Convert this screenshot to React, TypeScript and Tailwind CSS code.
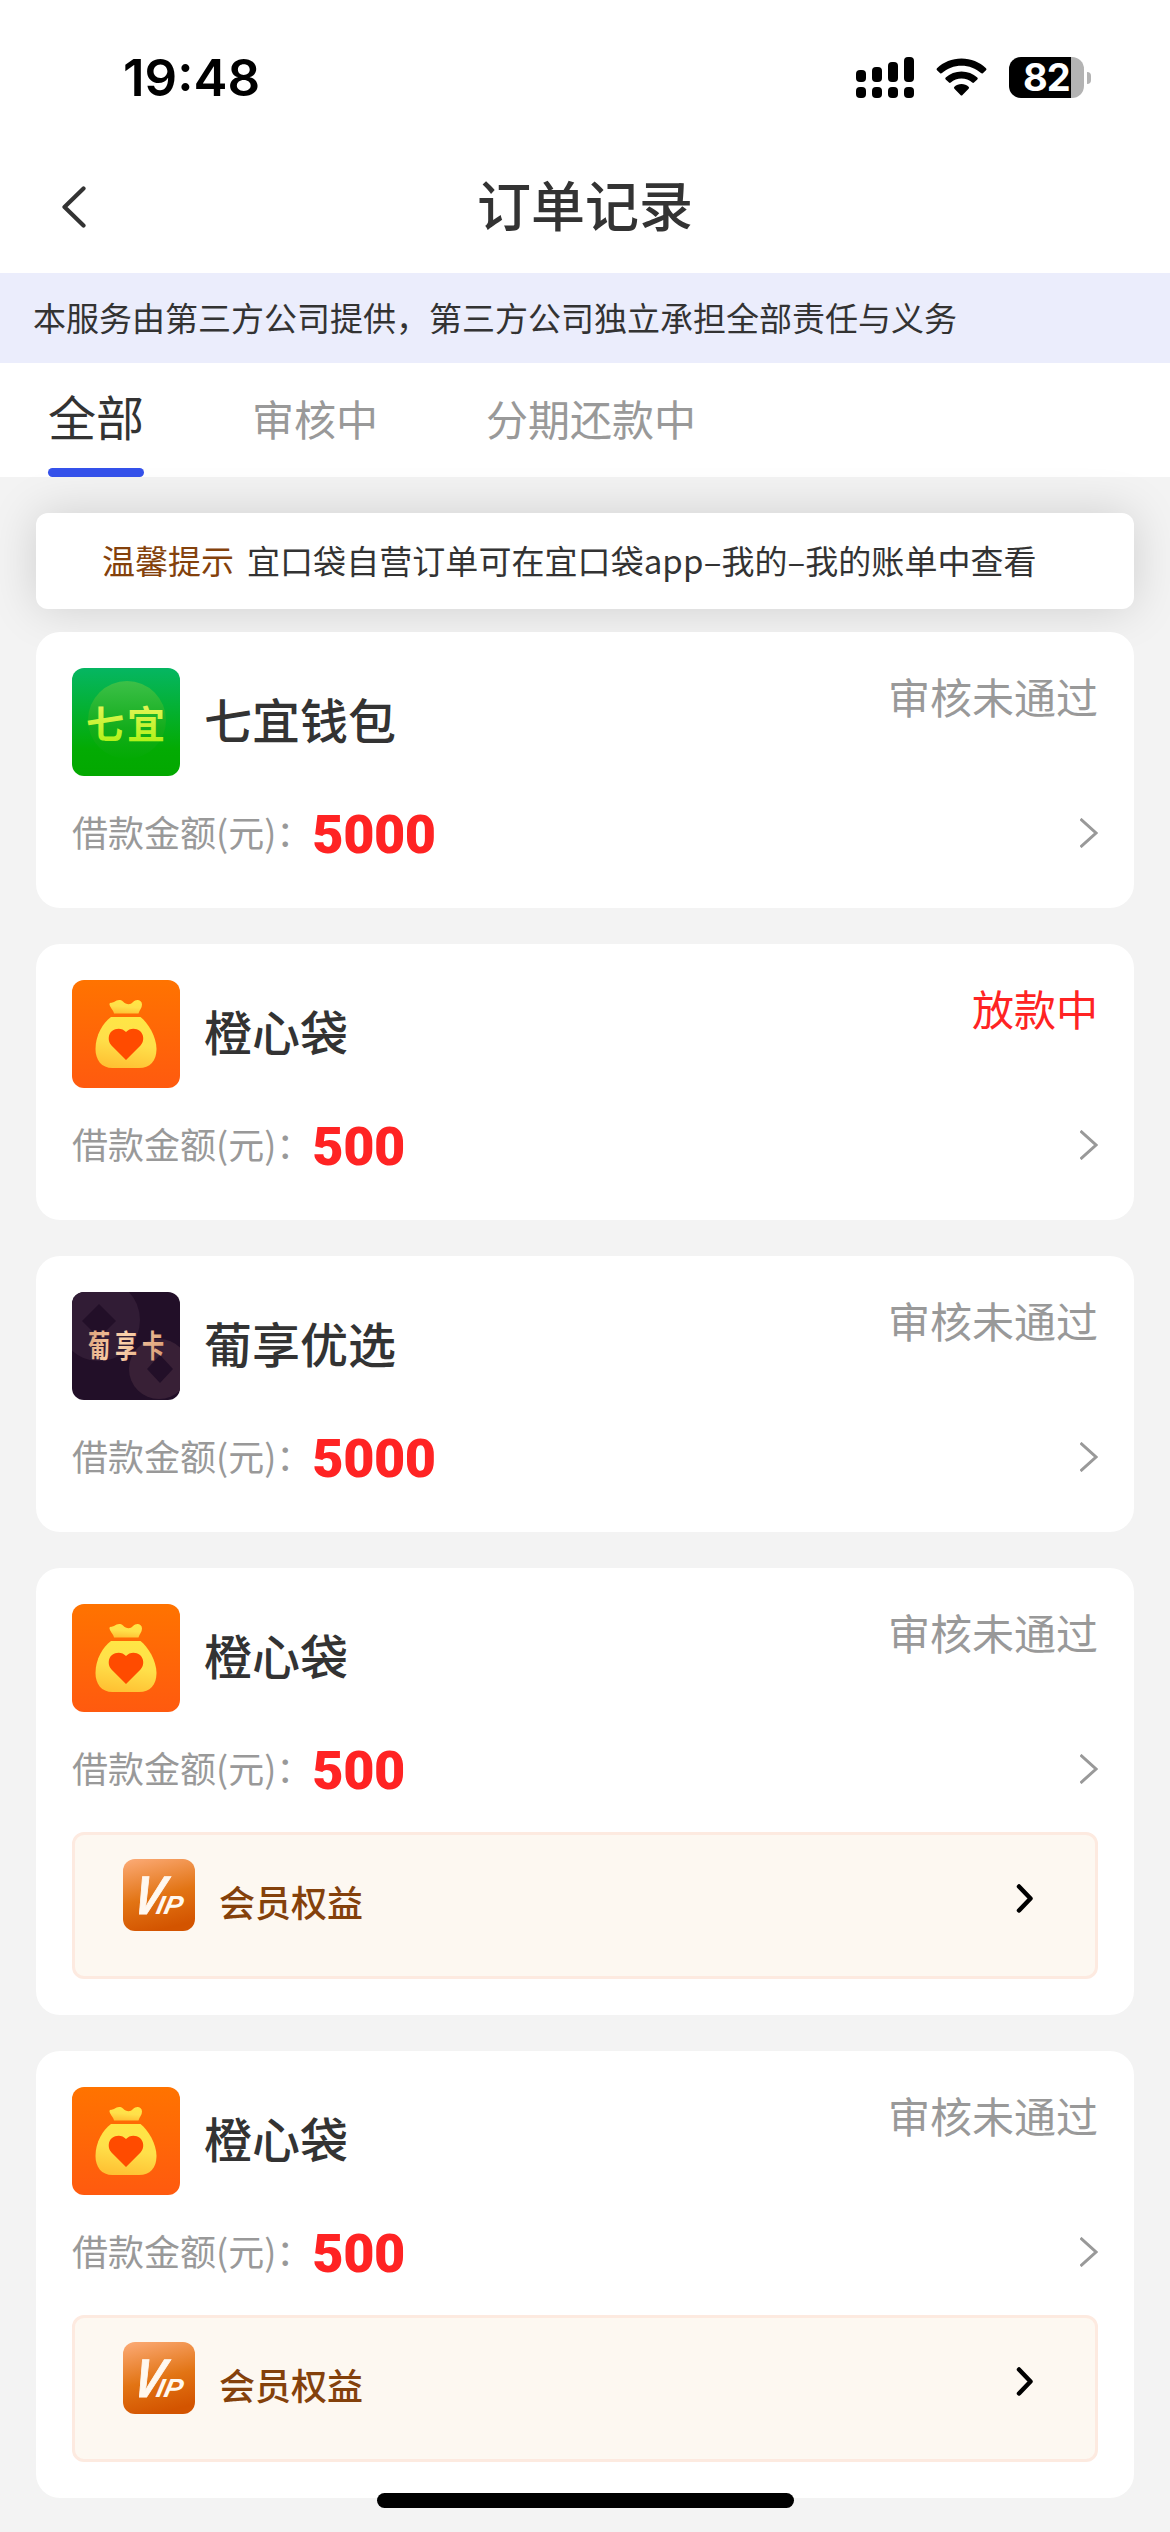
import type { ReactNode } from 'react';

type Logo = 'qiyi' | 'chengxin' | 'puxiang';

interface Order {
  id: number;
  name: string;
  logo: Logo;
  amount: number;
  status: string;
  active?: boolean;
  vip?: boolean;
}

const orders: Order[] = [
  { id: 1, name: '七宜钱包', logo: 'qiyi', amount: 5000, status: '审核未通过' },
  { id: 2, name: '橙心袋', logo: 'chengxin', amount: 500, status: '放款中', active: true },
  { id: 3, name: '葡享优选', logo: 'puxiang', amount: 5000, status: '审核未通过' },
  { id: 4, name: '橙心袋', logo: 'chengxin', amount: 500, status: '审核未通过', vip: true },
  { id: 5, name: '橙心袋', logo: 'chengxin', amount: 500, status: '审核未通过', vip: true },
];

const tabs = ['全部', '审核中', '分期还款中'];

function StatusBar() {
  return (
    <div className="flex h-[141px] items-start justify-between pl-[123px] pr-[79px] pt-[47px] font-['Inter',sans-serif] text-black">
      <span className="text-[51px] font-semibold leading-[62px]">19:48</span>
      <div className="flex items-center gap-[22px] pt-[10px]">
        <svg width="58" height="41" viewBox="0 0 58 41">
          <rect x="0" y="13" width="10" height="12" rx="4" />
          <rect x="16" y="10" width="10" height="15" rx="4" />
          <rect x="32" y="5" width="10" height="20" rx="4" />
          <rect x="48" y="0" width="10" height="25" rx="4" />
          <rect x="0" y="30" width="10" height="11" rx="4" />
          <rect x="16" y="30" width="10" height="11" rx="4" />
          <rect x="32" y="30" width="10" height="11" rx="4" />
          <rect x="48" y="30" width="10" height="11" rx="4" />
        </svg>
        <svg width="51" height="41" viewBox="0 0 51 41">
          <path d="M25.500 1.500C35 1.500 43.500 5 50 11.200Q51 12.200 50 13.200L46.800 16.200Q46 17 45 16.100C39.800 11.300 33 8.700 25.500 8.700S11.200 11.300 6 16.100Q5 17 4.200 16.200L1 13.200Q0 12.200 1 11.200C7.500 5 16 1.500 25.500 1.500Z" />
          <path d="M25.500 14.500C31.500 14.500 37 16.700 41.300 20.500Q42.300 21.500 41.300 22.500L38 25.600Q37.200 26.300 36.200 25.500C33.300 23 29.600 21.600 25.500 21.600S17.700 23 14.800 25.500Q13.800 26.300 13 25.600L9.700 22.500Q8.700 21.500 9.700 20.500C14 16.700 19.500 14.500 25.500 14.500Z" />
          <path d="M25.500 27C28.200 27 30.700 28 32.600 29.700Q33.600 30.700 32.600 31.700L26.500 38Q25.500 39 24.500 38L18.400 31.700Q17.400 30.700 18.400 29.700C20.300 28 22.800 27 25.500 27Z" />
        </svg>
        <div className="flex items-center gap-[3px]">
          <div className="flex h-[41px] w-[75px] items-center rounded-[12px] bg-linear-to-r from-black from-83% to-[#b3b3b3] to-83% pl-[14px] text-[38px] font-bold leading-[41px] tracking-[-1px] text-white">
            82
          </div>
          <div className="h-[12px] w-[4px] rounded-r-full bg-[#b3b3b3]" />
        </div>
      </div>
    </div>
  );
}

function NavBar() {
  return (
    <header className="grid h-[132px] grid-cols-[1fr_auto_1fr] items-center">
      <button className="pl-[60px]">
        <svg width="26" height="44" viewBox="0 0 26 44" fill="none" className="stroke-[#333333]">
          <path d="M23.500 3.500L4.500 22L23.500 40.500" strokeWidth="4.200" strokeLinecap="round" strokeLinejoin="round" />
        </svg>
      </button>
      <h1 className="pb-[6px] text-[54px] font-medium leading-none text-[#333333]">订单记录</h1>
    </header>
  );
}

function Tabs() {
  return (
    <nav className="flex h-[114px] gap-[108px] px-12">
      {tabs.map((tab, i) => (
        <button
          key={tab}
          className={
            i === 0
              ? 'flex flex-col justify-between text-[48px] leading-[104px] text-[#333333]'
              : 'flex flex-col text-[42px] leading-[110px] text-[#999999]'
          }
        >
          <span className="h-[105px]">{tab}</span>
          {i === 0 && <span className="h-[9px] w-full rounded-full bg-[#3552eb]" />}
        </button>
      ))}
    </nav>
  );
}

function QiyiLogo() {
  return (
    <svg width="108" height="108" viewBox="0 0 108 108">
      <defs>
        <linearGradient id="qiyi-bg" x1="0" y1="0" x2="0" y2="1">
          <stop offset="0" stopColor="#05b662" />
          <stop offset="0.75" stopColor="#03ab03" />
          <stop offset="1" stopColor="#03a800" />
        </linearGradient>
        <linearGradient id="qiyi-disc" x1="0" y1="0" x2="0" y2="1">
          <stop offset="0" stopColor="#3cc048" />
          <stop offset="0.6" stopColor="#14ad1c" />
          <stop offset="1" stopColor="#03aa03" />
        </linearGradient>
        <linearGradient id="qiyi-text" x1="0" y1="0" x2="0" y2="1">
          <stop offset="0" stopColor="#f3f56a" />
          <stop offset="1" stopColor="#a6f20c" />
        </linearGradient>
      </defs>
      <rect width="108" height="108" fill="url(#qiyi-bg)" />
      <circle cx="55" cy="52" r="39" fill="url(#qiyi-disc)" />
      <text x="14" y="70" fontSize="38" fontWeight="700" letterSpacing="3" fill="url(#qiyi-text)">
        七宜
      </text>
    </svg>
  );
}

function ChengxinLogo() {
  return (
    <svg width="108" height="108" viewBox="0 0 108 108">
      <defs>
        <linearGradient id="cx-bg" x1="0" y1="0" x2="0" y2="1">
          <stop offset="0" stopColor="#ff7300" />
          <stop offset="1" stopColor="#ff5a0f" />
        </linearGradient>
        <linearGradient id="cx-bag" x1="0.600" y1="0" x2="0.400" y2="1">
          <stop offset="0" stopColor="#ffe645" />
          <stop offset="0.5" stopColor="#ffe04a" />
          <stop offset="1" stopColor="#ffc133" />
        </linearGradient>
      </defs>
      <rect width="108" height="108" fill="url(#cx-bg)" />
      <path
        d="M37.500 24.500C37 22.500 40 23 42 22C45 20 48 19 51 21.500C54 24.500 58 25.500 61 22C64 18.500 70 19.500 70 24.500C70 28 67.500 30 66.500 33.500H42C41.500 30 38.500 28.500 37.500 24.500Z"
        fill="url(#cx-bag)"
      />
      <path
        d="M39 37H68.500C76 42.500 84.500 57 84.500 69C84.500 81 78 88 67 88H40.500C29.500 88 23.500 80 23.500 69C23.500 55 31 43 39 37Z"
        fill="url(#cx-bag)"
      />
      <path
        d="M54 80L39.500 65.500C35.500 61.500 36 54 40 51C44.500 47.500 50.500 48 54 52C57.500 48 63.500 47.500 68 51C72 54.500 72.500 61.500 68.500 65.500Z"
        fill="#ff4b00"
      />
    </svg>
  );
}

function PuxiangLogo() {
  return (
    <svg width="108" height="108" viewBox="0 0 108 108">
      <defs>
        <linearGradient id="px-text" x1="0" y1="0" x2="1" y2="0.300">
          <stop offset="0" stopColor="#d99a72" />
          <stop offset="0.5" stopColor="#fcd3ac" />
          <stop offset="1" stopColor="#dca17a" />
        </linearGradient>
      </defs>
      <rect width="108" height="108" fill="#220f28" />
      <circle cx="27" cy="28" r="41" fill="#311c35" />
      <path d="M27 12L44 29L27 46L10 29Z" fill="#220f28" strokeLinejoin="round" />
      <circle cx="87" cy="77" r="30" fill="#382036" />
      <path d="M88 63L101 77L88 91L75 77Z" fill="#220f28" />
      <text
        transform="translate(16 65) scale(0.82 1.15)"
        fontSize="27"
        fontWeight="700"
        letterSpacing="6"
        fill="url(#px-text)"
      >
        葡享卡
      </text>
    </svg>
  );
}

const logos: Record<Logo, ReactNode> = {
  qiyi: <QiyiLogo />,
  chengxin: <ChengxinLogo />,
  puxiang: <PuxiangLogo />,
};

function VipBadge() {
  return (
    <svg width="72" height="72" viewBox="0 0 72 72">
      <defs>
        <linearGradient id="vip-bg" x1="0.200" y1="0" x2="0.450" y2="1">
          <stop offset="0" stopColor="#faa770" />
          <stop offset="0.55" stopColor="#e27414" />
          <stop offset="1" stopColor="#d35400" />
        </linearGradient>
      </defs>
      <rect width="72" height="72" rx="12" fill="url(#vip-bg)" />
      <text
        transform="translate(8 55) skewX(-12)"
        fill="#fff8f0"
        fontFamily="Liberation Sans, sans-serif"
        fontWeight="700"
        fontStyle="italic"
        fontSize="54"
        stroke="#fff8f0"
        strokeWidth="1"
      >
        <tspan textLength="29" lengthAdjust="spacingAndGlyphs">V</tspan>
        <tspan dx="-5" fontSize="26" textLength="26" lengthAdjust="spacingAndGlyphs" strokeWidth="0">IP</tspan>
      </text>
    </svg>
  );
}

function VipRow() {
  return (
    <div className="mt-[31px] flex h-[147px] items-start rounded-[12px] border-[3px] border-[#fdeae0] bg-[#fdf8f1] pl-12 pr-[61px] pt-6">
      <VipBadge />
      <span className="ml-6 mt-[16px] text-[36px] font-medium leading-[52px] text-[#84410b]">会员权益</span>
      <svg width="18" height="31" viewBox="0 0 18 31" fill="none" className="ml-auto mt-[24px] stroke-black">
        <path d="M3 3.500L14.500 15.500L3 27.500" strokeWidth="4.500" strokeLinecap="round" strokeLinejoin="round" />
      </svg>
    </div>
  );
}

function OrderCard({ order }: { order: Order }) {
  return (
    <section className={order.vip ? 'h-[447px] rounded-[24px] bg-white p-9' : 'h-[276px] rounded-[24px] bg-white p-9'}>
      <div className="flex h-[108px] items-center">
        <div className="h-[108px] w-[108px] shrink-0 overflow-hidden rounded-[12px]">{logos[order.logo]}</div>
        <h2 className="ml-6 pb-[8px] text-[48px] font-medium leading-none text-[#333333]">{order.name}</h2>
        <span
          className={
            order.active
              ? 'ml-auto self-start text-[42px] leading-[56px] text-[#ff2323]'
              : 'ml-auto self-start text-[42px] leading-[56px] text-[#999999]'
          }
        >
          {order.status}
        </span>
      </div>
      <div className="mt-[25px] flex h-[64px] items-center">
        <span className="pb-[4px] text-[36px] leading-[60px] text-[#999999]">借款金额(元)：</span>
        <span className="pt-[4px] font-['Roboto',sans-serif] text-[54px] font-black leading-[60px] tracking-[-0.5px] text-[#ff2323]">
          {order.amount}
        </span>
        <svg width="18" height="30" viewBox="0 0 18 30" fill="none" className="ml-auto stroke-[#999999]">
          <path d="M0.500 1L16 15L0.500 29" strokeWidth="3" />
        </svg>
      </div>
      {order.vip && <VipRow />}
    </section>
  );
}

export default function App() {
  return (
    <div className="relative flex h-[2532px] w-[1170px] flex-col overflow-hidden bg-[#f3f3f3] font-['Noto_Sans_CJK_SC',sans-serif]">
      <div className="bg-white">
        <StatusBar />
        <NavBar />
        <p className="h-[90px] bg-[#ebedfc] pl-[33px] text-[33px] leading-[88px] text-[#333333]">
          本服务由第三方公司提供，第三方公司独立承担全部责任与义务
        </p>
        <Tabs />
      </div>

      <main className="flex flex-col px-9 pt-9">
        <div className="flex h-[96px] items-center gap-[13px] rounded-[12px] bg-white pl-[66px] text-[33px] shadow-[0_0_48px_rgba(0,0,0,0.15)]">
          <span className="text-[#84410b]">温馨提示</span>
          <span className="tracking-[0.06px] text-[#333333]">宜口袋自营订单可在宜口袋app–我的–我的账单中查看</span>
        </div>
        <div className="relative mt-[23px] flex flex-col gap-9">
          {orders.map((order) => (
            <OrderCard key={order.id} order={order} />
          ))}
        </div>
      </main>

      {/* Home indicator */}
      <div className="absolute bottom-6 left-[377px] h-[15px] w-[417px] rounded-full bg-black" />
    </div>
  );
}
